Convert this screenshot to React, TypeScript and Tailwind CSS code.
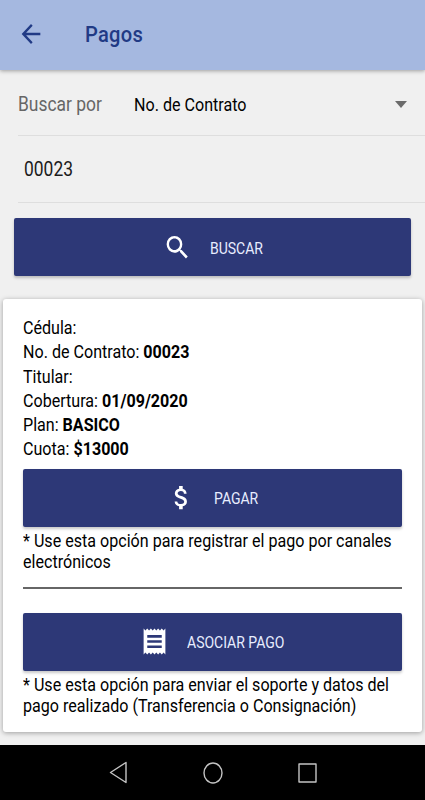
import type { ReactNode } from 'react';
import type { IconType } from 'react-icons';
import { MdArrowBack, MdAttachMoney, MdReceipt, MdSearch } from 'react-icons/md';

const DETAILS = [
  { label: 'Cédula:', value: '' },
  { label: 'No. de Contrato:', value: '00023' },
  { label: 'Titular:', value: '' },
  { label: 'Cobertura:', value: '01/09/2020' },
  { label: 'Plan:', value: 'BASICO' },
  { label: 'Cuota:', value: '$13000' },
];

function ActionButton({ icon: Icon, label, labelWidth }: { icon: IconType; label: string; labelWidth: string }) {
  return (
    <button className="flex h-[58px] w-full items-center justify-center rounded-[2px] bg-[#2d3877] text-white shadow-[0_2px_3px_rgba(0,0,0,0.22)]">
      <Icon className="h-[31px] w-[29px] shrink-0" preserveAspectRatio="none" />
      <span className={`mt-[3px] ml-[18px] text-left text-[16px] text-[#e8edff] ${labelWidth}`}>
        <span className="inline-block origin-left scale-x-[0.875] whitespace-nowrap">{label}</span>
      </span>
    </button>
  );
}

// Slightly condensed run of text
function Narrow({ children }: { children: ReactNode }) {
  return <span className="inline-block origin-left scale-x-[0.894] whitespace-nowrap">{children}</span>;
}

export default function App() {
  return (
    <div className="flex h-[800px] w-[425px] flex-col overflow-hidden bg-[#f0f0f0] font-['Roboto',sans-serif] text-black">
      {/* Header */}
      <header className="z-10 flex h-[70px] shrink-0 items-center bg-[#a5b8e0] pl-[17px] text-[#213a85] shadow-[0_1px_4px_rgba(0,0,0,0.35)]">
        <MdArrowBack className="mt-[-2px] h-[30px] w-[28px]" preserveAspectRatio="none" />
        <h1 className="ml-[40px] text-[22.5px] font-medium tracking-[0.3px]">
          <Narrow>Pagos</Narrow>
        </h1>
      </header>

      {/* Search form */}
      <div className="ml-[18px] flex h-[66px] shrink-0 items-center border-b border-[#dedede] pt-[3px] text-[18px]">
        <span className="w-[116px] pt-px text-[19.5px] text-[#666]">
          <Narrow>Buscar por</Narrow>
        </span>
        <span className="flex-1">
          <Narrow>No. de Contrato</Narrow>
        </span>
        <svg className="mr-[18px] h-[7px] w-[12px]" viewBox="0 0 12 7" fill="#6b6b6b">
          <path d="M0 0h12L6 7z" />
        </svg>
      </div>
      <div className="ml-[18px] flex h-[67px] shrink-0 items-center border-b border-[#dedede] pt-[2px] pl-[6px] text-[19.5px] text-[#1c1c1c]">
        <Narrow>00023</Narrow>
      </div>
      <div className="mt-[15px] ml-[14px] w-[397px]">
        <ActionButton icon={MdSearch} label="BUSCAR" labelWidth="w-[52px]" />
      </div>

      {/* Contract card */}
      <main className="mt-[23px] ml-[3px] h-[433px] w-[419px] shrink-0 rounded-[3px] bg-white pt-[17px] pr-[20px] pl-[20px] shadow-[0_1px_5px_rgba(0,0,0,0.35)]">
        <ul className="text-[18px] leading-[24.3px]">
          {DETAILS.map(d => (
            <li key={d.label}>
              <Narrow>
                {d.label} <b className="font-bold">{d.value}</b>
              </Narrow>
            </li>
          ))}
        </ul>
        <div className="mt-[7px]">
          <ActionButton icon={MdAttachMoney} label="PAGAR" labelWidth="w-[45px]" />
        </div>
        <p className="mt-[3px] text-[18px] leading-[21px]">
          <Narrow>* Use esta opción para registrar el pago por canales</Narrow>
          <br />
          <Narrow>electrónicos</Narrow>
        </p>
        <hr className="mt-[15px] mb-[24px] border-t-2 border-[#666]" />
        <ActionButton icon={MdReceipt} label="ASOCIAR PAGO" labelWidth="w-[98px]" />
        <p className="mt-[3px] text-[18px] leading-[21px]">
          <Narrow>* Use esta opción para enviar el soporte y datos del</Narrow>
          <br />
          <Narrow>pago realizado (Transferencia o Consignación)</Narrow>
        </p>
      </main>

      {/* System navigation */}
      <nav className="mt-auto flex h-[55px] shrink-0 items-center justify-center gap-[75px] bg-black">
        <svg className="h-[23px] w-[19px]" viewBox="0 0 19 23" fill="none" stroke="#c4c4c4" strokeWidth="1.4" strokeLinejoin="round">
          <path d="M17 1.5v20L1.500 11.500z" />
        </svg>
        <svg className="h-[22px] w-[20px]" viewBox="0 0 20 22" fill="none" stroke="#c4c4c4" strokeWidth="1.4">
          <ellipse cx="10" cy="11" rx="9" ry="10" />
        </svg>
        <svg className="h-[20px] w-[19px]" viewBox="0 0 19 20" fill="none" stroke="#c4c4c4" strokeWidth="1.4" strokeLinejoin="round">
          <path d="M1 1h17v18H1z" />
        </svg>
      </nav>
    </div>
  );
}
